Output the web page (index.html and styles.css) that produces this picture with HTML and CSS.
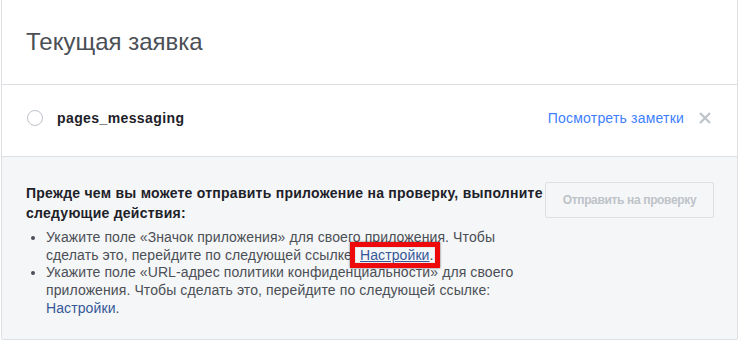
FILE: index.html
```html
<!DOCTYPE html>
<html>
<head>
  <title>Текущая заявка</title>
  <link rel="stylesheet" href="styles.css">
</head>
<body>
  <div class="panel">
    <div class="panel-header">
      <h2 class="panel-title">Текущая заявка</h2>
    </div>

    <div class="perm-row">
      <span class="status-dot"></span>
      <span class="perm-name">pages_messaging</span>
      <a class="notes-link" href="#">Посмотреть заметки</a>
      <span class="remove-btn">
        <svg width="12" height="12" viewBox="0 0 12 12">
          <path d="M1 1 L11 11 M11 1 L1 11" stroke="#bec3c9" stroke-width="2.2" fill="none"/>
        </svg>
      </span>
    </div>

    <div class="panel-footer">
      <div class="todo">
        <p class="todo-title">Прежде чем вы можете отправить приложение на проверку, выполните следующие действия:</p>
        <ul class="todo-list">
          <li>Укажите поле «Значок приложения» для своего приложения. Чтобы сделать это, перейдите по следующей ссылке: <a class="settings-link marked" href="#">Настройки</a>.</li>
          <li>Укажите поле «URL-адрес политики конфиденциальности» для своего приложения. Чтобы сделать это, перейдите по следующей ссылке: <a class="settings-link" href="#">Настройки</a>.</li>
        </ul>
      </div>
      <button class="submit-btn" disabled>Отправить на проверку</button>
    </div>
  </div>
</body>
</html>
```

FILE: styles.css
```css
:root {
  --border: #dddfe2;
  --text: #4b4f56;
  --dark: #1d2129;
  --muted: #bec3c9;
}

body {
  margin: 0;
  font-family: "Liberation Sans", Arial, sans-serif;
  background-color: #fff;
  color: var(--text);
}

.panel {
  margin: 0 1px;
  border: 1px solid var(--border);
  border-top: none;
  border-radius: 0 0 3px 3px;
  height: 340px;
  box-sizing: border-box;
  display: flex;
  flex-direction: column;
}

.panel-header {
  padding: 28px 24px;
  border-bottom: 1px solid var(--border);
}

.panel-title {
  margin: 0;
  font-size: 24px;
  line-height: 28px;
  font-weight: normal;
  color: var(--text);
}

.perm-row {
  display: flex;
  align-items: center;
  height: 72px;
  padding: 0 26px 6px 25px;
  box-sizing: border-box;
  border-bottom: 1px solid var(--border);
  font-size: 14px;
}

.status-dot {
  width: 14px;
  height: 14px;
  border: 1.5px solid var(--muted);
  border-radius: 50%;
  margin-right: 14px;
}

.perm-name {
  flex: 1;
  font-weight: bold;
  letter-spacing: 0.4px;
  color: var(--dark);
}

.notes-link {
  color: #4080ff;
  letter-spacing: 0.2px;
  text-decoration: none;
}

.remove-btn {
  display: flex;
  margin-left: 15px;
}

.panel-footer {
  flex: 1;
  background-color: #f5f6f7;
  border-radius: 0 0 3px 3px;
  padding: 24px 23px 0 24px;
  display: flex;
  align-items: flex-start;
}

.todo {
  flex: 1;
  padding-top: 3px;
  font-size: 14px;
}

.todo-title {
  margin: 0 0 6px;
  font-weight: bold;
  line-height: 19.5px;
  letter-spacing: 0.25px;
  color: var(--dark);
}

.todo-list {
  margin: 0;
  padding-left: 20px;
  line-height: 17.7px;
  letter-spacing: 0.1px;
}

.settings-link {
  color: #365899;
  text-decoration: none;
}

.settings-link.marked {
  position: relative;
  text-decoration: underline;
}

/* red highlight frame drawn over the first link */
.settings-link.marked::after {
  content: "";
  position: absolute;
  left: -10px;
  right: -10px;
  top: -5px;
  bottom: -5px;
  border: 5px solid #ee0a0a;
  box-shadow: 0 0 2px rgba(0, 0, 0, 0.6), inset 0 0 1px rgba(0, 0, 0, 0.5);
}

.submit-btn {
  width: 169px;
  height: 36px;
  margin-top: 1px;
  background-color: #f5f6f7;
  border: 1px solid var(--border);
  border-radius: 2px;
  color: var(--muted);
  font-family: inherit;
  font-size: 12px;
  font-weight: bold;
  letter-spacing: -0.35px;
}
```
